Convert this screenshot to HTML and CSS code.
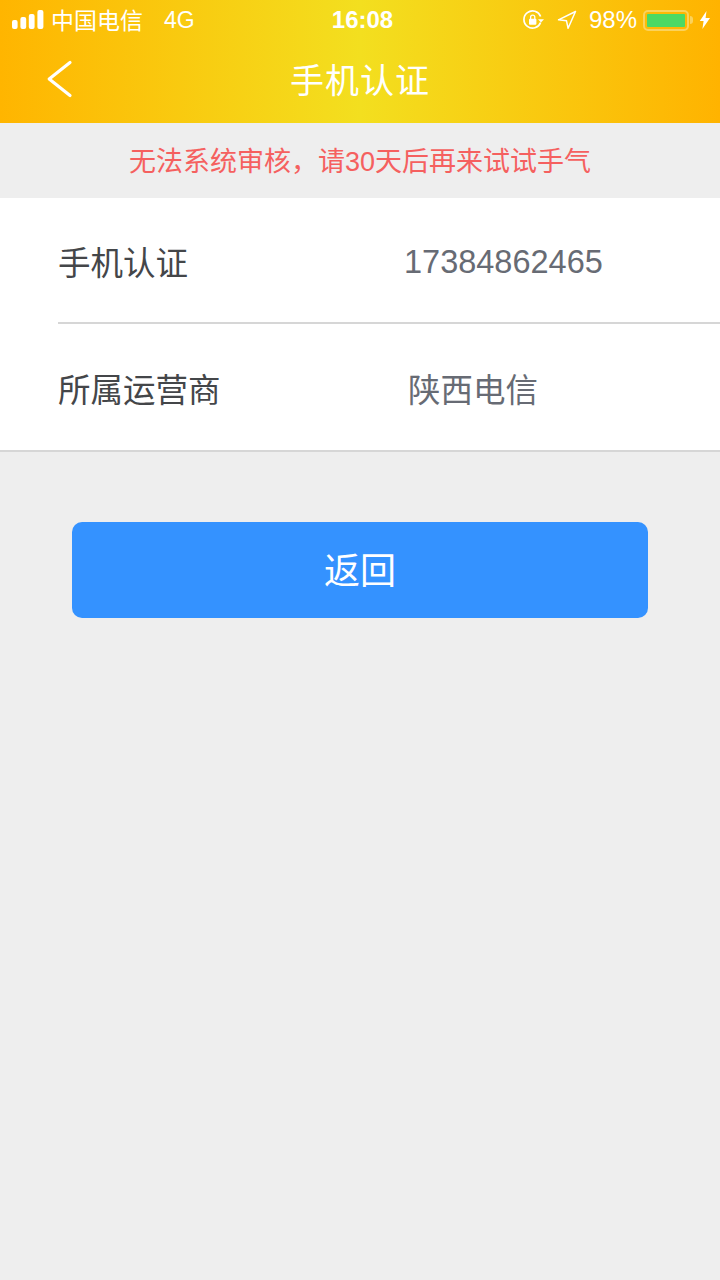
FILE: index.html
```html
<!DOCTYPE html>
<html lang="zh">
<head>
<meta charset="utf-8">
<title>手机认证</title>
<link rel="stylesheet" href="styles.css">
</head>
<body>
<header class="top">
  <div class="status">
    <div class="status-left">
      <svg class="signal" width="32" height="20" viewBox="0 0 32 20"><rect x="0" y="10" width="5.6" height="9" rx="2"/><rect x="8.4" y="7" width="5.8" height="12" rx="2"/><rect x="16.8" y="4" width="5.8" height="15" rx="2"/><rect x="25.4" y="0" width="6" height="19" rx="2"/></svg>
      <span class="carrier">中国电信</span>
      <span class="net">4G</span>
    </div>
    <div class="clock">16:08</div>
    <div class="status-right">
      <svg class="lock" width="22" height="20" viewBox="0 0 22 20"><path d="M17.6 12.5A8.6 8.6 0 1 1 17.6 6.5" fill="none" stroke="#fff" stroke-width="1.7"/><path d="M15 9.2h6l-3 3.4z" fill="#fff"/><rect x="6" y="8.8" width="7.4" height="6" rx="1" fill="#fff"/><path d="M7.6 9V7.2a2.1 2.1 0 0 1 4.2 0V9" fill="none" stroke="#fff" stroke-width="1.3"/></svg>
      <svg class="loc" width="20" height="20" viewBox="0 0 20 20"><path d="M18.5 1.5 1.5 9.8l8 1 1.6 7.5z" fill="none" stroke="#fff" stroke-width="1.5" stroke-linejoin="round"/></svg>
      <span class="pct">98%</span>
      <div class="battery"><div class="battery-fill"></div></div>
      <div class="battery-tip"></div>
      <svg class="bolt" width="12" height="18" viewBox="0 0 12 18"><path d="M7.5 0 0.8 10h3.8L3.4 18l7.6-11H6.6z" fill="#fff"/></svg>
    </div>
  </div>
  <div class="nav">
    <svg class="back" width="28" height="40" viewBox="0 0 28 40"><path d="M24 2.5 3.2 19 24 35.5" fill="none" stroke="#fff" stroke-width="3.2" stroke-linecap="round" stroke-linejoin="round"/></svg>
    <h1 class="title">手机认证</h1>
  </div>
</header>
<p class="notice">无法系统审核，请30天后再来试试手气</p>
<section class="list">
  <div class="row row-inset">
    <span class="label">手机认证</span>
    <span class="value value-num">17384862465</span>
  </div>
  <div class="row row-last">
    <span class="label">所属运营商</span>
    <span class="value value-cjk">陕西电信</span>
  </div>
</section>
<div class="actions">
  <button class="btn">返回</button>
</div>
</body>
</html>
```
FILE: styles.css
```css
* { box-sizing: border-box; }
html, body { margin: 0; padding: 0; }
body {
  width: 720px;
  min-height: 1280px;
  background: #eeeeee;
  font-family: "Liberation Sans", "Noto Sans CJK SC", sans-serif;
}
.top {
  height: 123px;
  background: linear-gradient(90deg, #ffb500 0%, #f3df1f 50%, #ffb300 100%);
  color: #fff;
}
.status {
  height: 40px;
  display: grid;
  grid-template-columns: 1fr auto 1fr;
  align-items: center;
  padding: 0 9px 0 12px;
  font-size: 23px;
  color: #fff;
}
.status-left { display: flex; align-items: center; }
.signal { fill: #fff; margin-right: 7px; }
.carrier { width: 92px; white-space: nowrap; padding-bottom: 3px; }
.net { margin-left: 21px; }
.clock { font-size: 24px; font-weight: 700; margin-left: 2px; }
.status-right { display: flex; align-items: center; justify-content: flex-end; }
.lock { margin-right: 12px; }
.loc { margin-right: 12px; }
.pct { font-size: 24px; margin-right: 6px; }
.battery {
  width: 46px;
  height: 21px;
  border: 2px solid #fbd25c;
  border-radius: 5px;
  padding: 2px;
}
.battery-fill { height: 100%; background: #4cd964; border-radius: 1px; }
.battery-tip {
  width: 3px;
  height: 8px;
  margin: 0 6px 0 1px;
  background: #fbd25c;
  border-radius: 0 3px 3px 0;
}
.nav {
  height: 83px;
  position: relative;
  display: flex;
  align-items: center;
  justify-content: center;
  padding-bottom: 6px;
}
.back { position: absolute; left: 46px; top: 20px; }
.title {
  margin: 0;
  font-size: 34px;
  letter-spacing: 1px;
  font-weight: 400;
  color: #fff;
}
.notice {
  margin: 0;
  height: 75px;
  line-height: 78px;
  text-align: center;
  font-size: 27px;
  color: #f5605f;
}
.list { background: #fff; border-bottom: 2px solid #d6d6d6; }
.row {
  display: flex;
  align-items: center;
  font-size: 32.5px;
}
.row-inset {
  height: 126px;
  margin-left: 58px;
  border-bottom: 2px solid #d6d6d6;
}
.row-last { height: 126px; padding-left: 58px; }
.label { width: 346px; color: #444649; }
.value { color: #676b74; }
.value-num { padding-top: 4px; }
.value-cjk { margin-left: 4px; }
.actions { padding: 70px 72px 0; }
.btn {
  display: block;
  width: 100%;
  height: 96px;
  border: 0;
  border-radius: 10px;
  background: #3492ff;
  color: #fff;
  font: inherit;
  font-size: 36px;
  padding: 0 0 4px;
}
```
